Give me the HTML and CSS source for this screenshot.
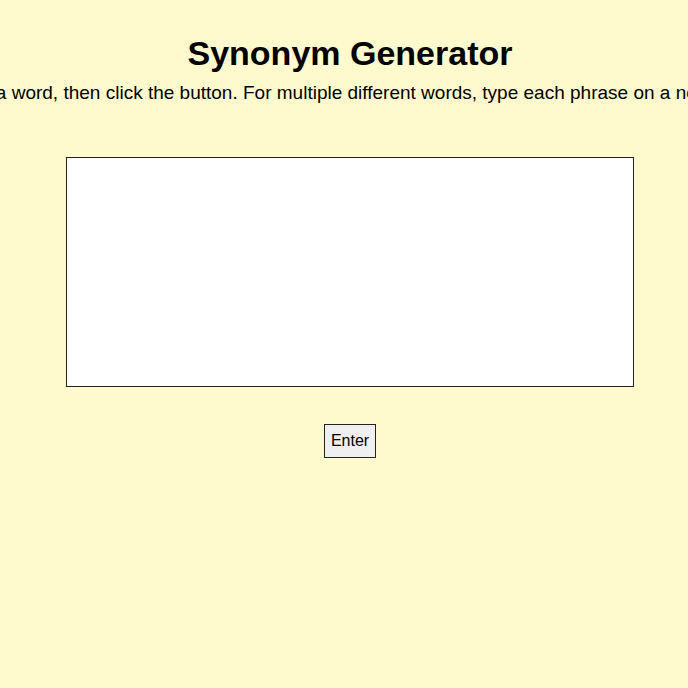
FILE: index.html
```html
<!DOCTYPE html>
<html>
<head>
<meta charset="utf-8">
<link rel="stylesheet" href="styles.css">
</head>
<body>
<main class="page">
  <h1 class="title">Synonym Generator</h1>
  <p class="intro">Type a word, then click the button. For multiple different words, type each phrase on a new line.</p>
  <textarea class="input"></textarea>
  <button class="enter">Enter</button>
</main>
</body>
</html>
```
FILE: styles.css
```css
html, body {
  margin: 0;
  padding: 0;
  background: #fffacd;
  overflow: hidden;
}
.page {
  width: 700px;
  display: flex;
  flex-direction: column;
  align-items: center;
  font-family: "Liberation Sans", Arial, sans-serif;
  color: #000;
  padding-top: 34px;
}
.title {
  margin: 0;
  font-size: 34px;
  font-weight: bold;
  line-height: 38px;
}
.intro {
  margin: 10px 0 0;
  font-size: 19px;
  line-height: 22px;
  white-space: nowrap;
}
.input {
  margin-top: 53px;
  width: 568px;
  height: 230px;
  box-sizing: border-box;
  border: 1px solid #222;
  background: #fff;
  resize: none;
  padding: 2px;
}
.enter {
  margin-top: 37px;
  font-family: "Liberation Sans", Arial, sans-serif;
  font-size: 16px;
  line-height: 18px;
  padding: 7px 6px;
  border: 1px solid #222;
  background: #efefef;
  color: #000;
}
```
